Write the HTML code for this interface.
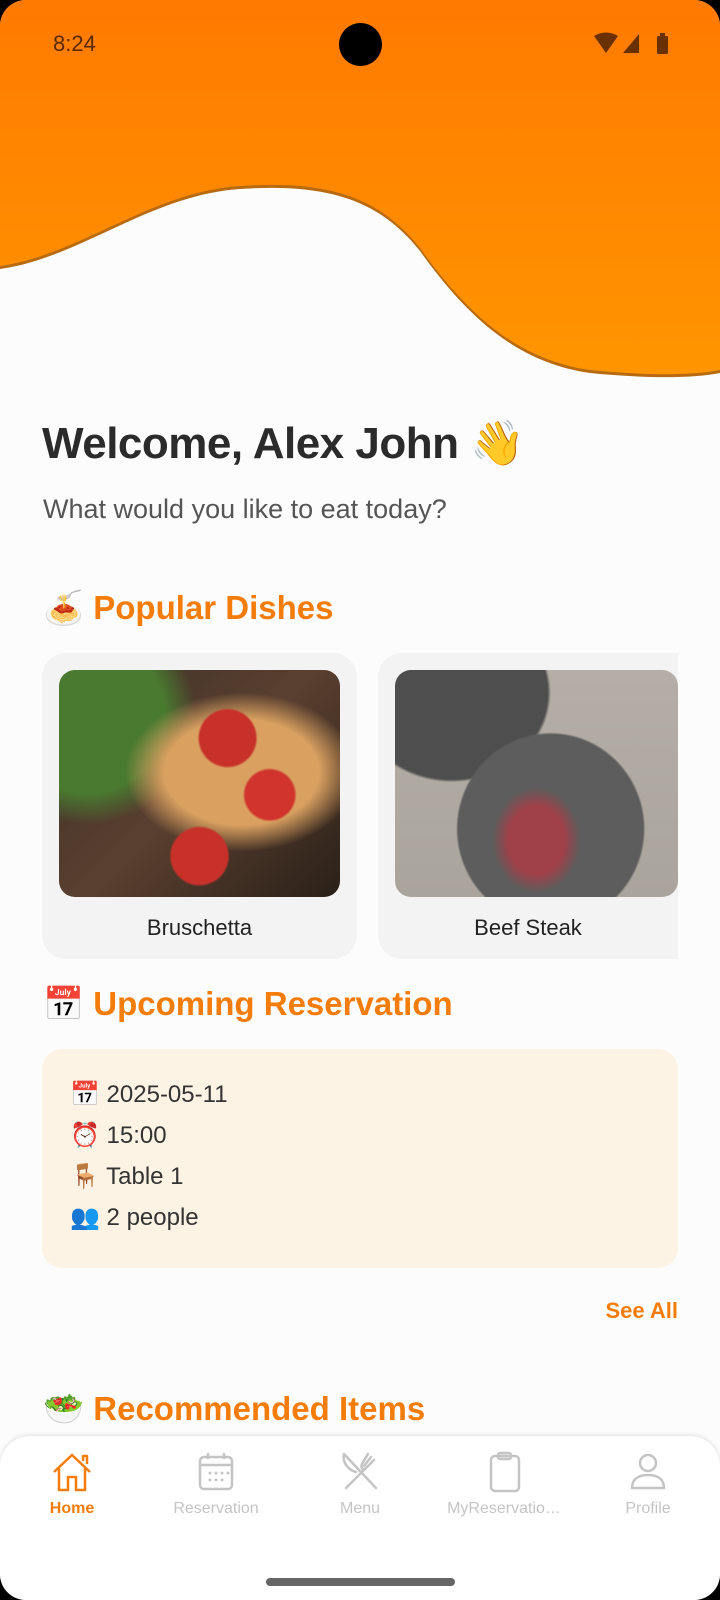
<!DOCTYPE html>
<html><head><meta charset="utf-8"><style>
*{margin:0;padding:0;box-sizing:border-box}
html,body{width:720px;height:1600px;background:#000;overflow:hidden}
#scr{position:absolute;left:0;top:0;width:720px;height:1600px;background:#fcfcfc;border-radius:26px;overflow:hidden;font-family:"Liberation Sans","Noto Sans CJK SC",sans-serif}
.abs{position:absolute}
h2{position:absolute;left:43px;font-size:33px;font-weight:bold;color:#f47c0a;white-space:nowrap}
.card{position:absolute;top:653px;width:315px;height:306px;background:#f3f3f3;border-radius:24px;overflow:hidden}
.img{position:absolute;left:17px;top:17px;width:281px;height:227px;border-radius:16px;overflow:hidden}
.cap{position:absolute;top:262px;left:0;width:100%;text-align:center;font-size:22px;color:#222}
.ln{position:absolute;left:70px;font-size:24px;color:#333}
.nav{position:absolute;left:0;top:1436px;width:720px;height:164px;background:#fff;border-radius:30px 30px 0 0;box-shadow:0 -1px 4px rgba(0,0,0,.12)}
.it{position:absolute;top:14px;width:144px;text-align:center;font-size:16px;color:#c4c4c4}
.it svg{display:block;margin:0 auto 6px}
</style></head><body><div id="scr">
<svg class="abs" style="left:0;top:0" width="720" height="400" viewBox="0 0 720 400">
<defs><linearGradient id="g" x1="0" y1="0" x2="0" y2="1"><stop offset="0" stop-color="#ff7a00"/><stop offset="1" stop-color="#ff9500"/></linearGradient></defs>
<path d="M0 0H720V370C690 376 640 375 590 370C520 360 470 318 420 248C380 198 330 180 240 186C150 192 80 255 0 266Z" fill="#b86a10" transform="translate(0,3)"/>
<path d="M0 0H720V370C690 376 640 375 590 370C520 360 470 318 420 248C380 198 330 180 240 186C150 192 80 255 0 266Z" fill="url(#g)"/>
</svg>
<div class="abs" style="left:53px;top:31px;font-size:22px;color:#5a2a00">8:24</div>
<div class="abs" style="left:339px;top:23px;width:43px;height:43px;border-radius:50%;background:#000"></div>
<svg class="abs" style="left:594px;top:32px" width="80" height="24" viewBox="0 0 80 24"><path d="M0 4Q12 -3 24 4L12 21Z" fill="#6a3000"/><path d="M29 21L45 2V21Z" fill="#6a3000"/><rect x="63" y="4" width="11" height="18" rx="1.5" fill="#6a3000"/><rect x="66" y="1" width="5" height="4" fill="#6a3000"/></svg>
<div class="abs" style="left:42px;top:417px;font-size:44px;font-weight:bold;color:#2b2b2b;white-space:nowrap;letter-spacing:-0.5px">Welcome, Alex John 👋</div>
<div class="abs" style="left:43px;top:494px;font-size:27px;color:#555">What would you like to eat today?</div>
<h2 style="top:589px">🍝 Popular Dishes</h2>
<div class="card" style="left:42px">
<div class="img" style="background:radial-gradient(circle at 60% 30%,#c8302a 0 12%,transparent 13%),radial-gradient(circle at 75% 55%,#d0342c 0 10%,transparent 11%),radial-gradient(circle at 50% 82%,#c8302a 0 12%,transparent 13%),radial-gradient(ellipse at 65% 45%,#d9a060 0 30%,transparent 45%),radial-gradient(circle at 10% 20%,#4a7a30 0 25%,transparent 35%),linear-gradient(135deg,#3b3028,#5a4030 50%,#2a2018)"></div>
<div class="cap">Bruschetta</div></div>
<div class="card" style="left:378px;width:300px;border-radius:24px 0 0 24px">
<div class="img" style="width:283px;background:radial-gradient(ellipse at 50% 75%,#a04048 0 14%,transparent 22%),radial-gradient(ellipse at 55% 70%,#5d5d5d 0 42%,transparent 43%),radial-gradient(ellipse at 20% 10%,#4e4e4e 0 30%,transparent 31%),linear-gradient(#b4aea6,#a9a49c)"></div>
<div class="cap">Beef Steak</div></div>
<h2 style="top:985px">📅 Upcoming Reservation</h2>
<div class="abs" style="left:42px;top:1049px;width:636px;height:219px;background:#fdf3e4;border-radius:20px"></div>
<div class="ln" style="top:1080px">📅 2025-05-11</div>
<div class="ln" style="top:1121px">⏰ 15:00</div>
<div class="ln" style="top:1162px">🪑 Table 1</div>
<div class="ln" style="top:1203px">👥 2 people</div>
<div class="abs" style="right:42px;top:1298px;font-size:22px;font-weight:bold;color:#f47c0a">See All</div>
<h2 style="top:1390px">🥗 Recommended Items</h2>
<div class="nav">
<div class="it" style="left:0;color:#f47c0a;font-weight:bold"><svg width="44" height="44" viewBox="0 0 44 44" fill="none" stroke="#f47c0a" stroke-width="2.5" stroke-linejoin="round"><path d="M4 22L22 5L40 22M9 18V40H18V27H26V40H35V18M33 11V6H37V14"/></svg>Home</div>
<div class="it" style="left:144px"><svg width="44" height="44" viewBox="0 0 44 44" fill="none" stroke="#c4c4c4" stroke-width="2.5"><rect x="6" y="7" width="32" height="32" rx="4"/><path d="M6 15H38M14 3V9M30 3V9"/><g fill="#c4c4c4" stroke="none"><circle cx="16" cy="23" r="1.5"/><circle cx="22" cy="23" r="1.5"/><circle cx="28" cy="23" r="1.5"/><circle cx="16" cy="30" r="1.5"/><circle cx="22" cy="30" r="1.5"/><circle cx="28" cy="30" r="1.5"/><circle cx="34" cy="23" r="1.5"/></g></svg>Reservation</div>
<div class="it" style="left:288px"><svg width="44" height="44" viewBox="0 0 44 44" fill="none" stroke="#c4c4c4" stroke-width="2.5" stroke-linecap="round"><path d="M6 4L38 38M6 4C4 12 10 20 18 22M30 4L24 14M36 10L28 18M33 7L26 16M24 14C22 18 26 22 28 18L8 38"/></svg>Menu</div>
<div class="it" style="left:432px"><svg width="44" height="44" viewBox="0 0 44 44" fill="none" stroke="#c4c4c4" stroke-width="2.5"><rect x="9" y="6" width="28" height="35" rx="4"/><rect x="16" y="3" width="13" height="6" rx="2"/></svg>MyReservatio…</div>
<div class="it" style="left:576px"><svg width="44" height="44" viewBox="0 0 44 44" fill="none" stroke="#c4c4c4" stroke-width="2.5"><circle cx="22" cy="13" r="8"/><path d="M6 38C6 28 14 25 22 25S38 28 38 38Z"/></svg>Profile</div>
<div class="abs" style="left:266px;top:142px;width:189px;height:8px;border-radius:4px;background:#666"></div>
</div>
</div></body></html>
